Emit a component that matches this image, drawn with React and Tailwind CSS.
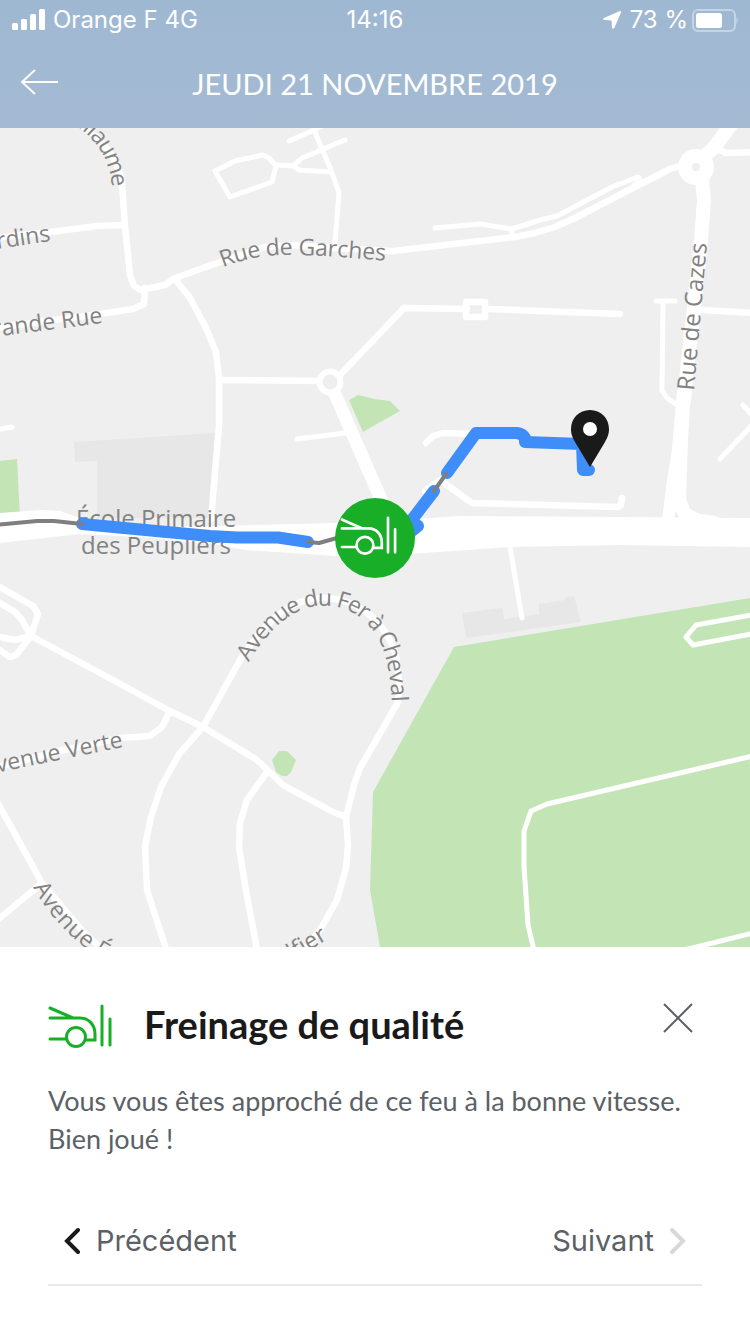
const minorRoads = [
	"M215 171L230 197L272 182L276 166L269 158L263 155L235 161Z",
	"M276 165L293 166L302 158L345 140",
	"M293 166L299 170L331 172",
	"M289 141L314 130L322 126",
	"M314 130L331 170L339 193L335 243",
	"M435 228L480 224L512 229L540 220L557 216L612 187L638 177L641 181L634 185",
	"M512 229V236",
	"M656 301H675",
	"M663 302L662 390L667 398L677 405",
	"M0 429L12 427",
	"M297 439L345 433",
	"M743 405L757 420L720 459",
	"M510 547L522 618",
	"M757 614L696 625L686 637L693 645L757 633",
	"M757 755L547 804L531 811L524 831V866L528 925L534 950",
	"M680 951L757 932",
];

const roads = [
	"M70 118C98 135 118 155 122 183L125 226L130 275L134 286L141 290L165 285L175 278L220 262L265 247L290 245L335 248L393 251L515 237L535 233L555 227L575 218L625 192L670 169L680 166",
	"M-5 238L50 232L97 226L125 225",
	"M145 288L144 304L133 309L100 314L-5 328",
	"M175 279L190 298L206 328L216 352L219 378V425L211 520",
	"M219 380L320 381",
	"M340 375L404 308L467 309",
	"M488 309L620 314",
	"M718 149L726 153L755 152",
	"M700 310L755 313",
	"M426 443L433 436L443 433L475 434",
	"M425 491L440 480L472 503L618 507L621 505L622 498",
	"M-5 584L33 606L38 614L31 636L16 655L10 657L-5 647",
	"M-5 600L15 612L22 620L31 636L15 640L-5 636",
	"M31 636L100 673L170 711L203 727L257 760L283 785L333 812L346 817",
	"M170 711L162 727L150 736L120 738L60 751L-5 768",
	"M203 727L240 660C262 625 290 599 320 598C360 597 386 624 396 655L400 690L397 704L375 742L360 768L354 785L346 817L348 845L346 868L337 900L320 930L300 955",
	"M203 727L179 754L161 787L151 817L145 846L147 890L168 955",
	"M267 772L247 800L240 823L239 847L245 885L258 955",
	"M-5 798L42 883L85 934L115 960",
	"M42 883L-5 922",
];

// Paths run through the middle of the letters, like the roads they name
const curvedLabels = [
	{ id: "guillaume", d: "M30 98C88 112 116 143 120 186", text: "Guillaume", end: true },
	{ id: "jardins", d: "M-80 252L50 233", text: "Jardins", end: true },
	{ id: "grande-rue", d: "M-95 340L102 315", text: "Grande Rue", end: true },
	{ id: "garches", d: "M220 260C250 248 275 246 300 247C330 248 355 250 400 254", text: "Rue de Garches" },
	{ id: "fer-a-cheval", d: "M242 658C260 628 286 600 318 598C350 596 370 611 384 632C395 652 401 680 400 730", text: "Avenue du Fer à Cheval" },
	{ id: "verte", d: "M-60 776L122 739", text: "Avenue Verte", end: true },
	{ id: "etienne", d: "M40 883C55 911 80 937 105 951L180 985", text: "Avenue Étienne" },
	{ id: "alfier", d: "M206 1004L324 932", text: "Rue Alfier", end: true },
];

const CarIcon = (props) => (
	<svg
		viewBox="0 0 64 44"
		fill="none"
		strokeWidth="3"
		strokeLinecap="round"
		aria-hidden="true"
		{...props}
	>
		<path d="M2 4L25 14M2 14H32C41 14 47 21 47 30V36H38M2 35H18M54 2V41M62 15V41" />
		<circle cx="28" cy="33" r="9.5" />
	</svg>
);

const StatusBar = () => (
	<div className="h-10 px-3 grid grid-cols-3 items-center text-2xl">
		<div className="flex items-center gap-2 whitespace-nowrap">
			<svg className="w-[33px] h-[22px]" viewBox="0 0 33 22" fill="white" aria-hidden="true">
				<rect x="0" y="14" width="6" height="7" rx="1.5" />
				<rect x="9" y="10" width="6" height="11" rx="1.5" />
				<rect x="18" y="5" width="6" height="16" rx="1.5" />
				<rect x="27" y="0" width="6" height="21" rx="1.5" />
			</svg>
			<span>Orange F 4G</span>
		</div>

		<span className="text-center">14:16</span>

		<div className="flex items-center justify-end gap-2 whitespace-nowrap">
			<svg className="w-5 h-5" viewBox="0 0 20 20" fill="white" aria-hidden="true">
				<path d="M18 1Q19.500 1 19 2.500L12.500 17.500Q10.500 20 10 17.500L9.500 10.500L2.500 10Q0 9.500 2 8Z" />
			</svg>
			<div className="flex items-center gap-1">
				<span>73 %</span>
				<svg className="w-[46px] h-6" viewBox="0 0 46 24" aria-hidden="true">
					<rect x="1" y="2" width="42" height="21" rx="5" fill="none" stroke="white" strokeOpacity="0.4" strokeWidth="2" />
					<rect x="4" y="5" width="26" height="15" rx="2.500" fill="white" />
					<path d="M44.500 9Q47 12.500 44.500 16Z" fill="white" fillOpacity="0.5" />
				</svg>
			</div>
		</div>
	</div>
);

const TripMap = () => (
	<svg
		className="block w-full h-auto bg-[#efefef]"
		viewBox="0 128 750 819"
		role="img"
		aria-label="Carte du trajet"
	>
		{/* Buildings and parks */}
		<g fill="#e7e7e7">
			<path d="M74 442L215 433L210 518H97V461L75 462Z" />
			<path d="M462 613L502 608L504 619L539 614V604L565 600V597L574 596L581 622L466 638Z" />
		</g>
		<g fill="#c3e5b5">
			<path d="M0 461L17 459L20 516H0Z" />
			<path d="M349 400L358 395L375 399L390 401L400 411L375 425L363 432Z" />
			<path d="M750 598L454 647L373 792L370 890L380 947H750Z" />
			<path d="M272 760L279 751H287L296 760L291 772L287 776H282L276 772Z" />
		</g>

		{/* Roads */}
		<g fill="none" stroke="white" strokeLinecap="round" strokeLinejoin="round">
			<g strokeWidth="5">
				{minorRoads.map((d) => (
					<path key={d} d={d} />
				))}
			</g>
			<g strokeWidth="6.500">
				{roads.map((d) => (
					<path key={d} d={d} />
				))}
				<rect x="466" y="302" width="19" height="15" />
			</g>
			<path d="M335 394L390 520" strokeWidth="13" />
			<path d="M700 160L713 149L736 118M702 180L704 200L701 240L695 300L688 360L684 400" strokeWidth="14" />
		</g>
		<circle cx="330" cy="382" r="10.500" fill="#efefef" stroke="white" strokeWidth="6" />
		<circle cx="696" cy="167" r="11" fill="#efefef" stroke="white" strokeWidth="14" />
		<path
			fill="white"
			d="M677 390H691L688 440L686 498L690 509L700 514L716 516L722 519H662L667 480L672 450Z"
		/>
		<path fill="#efefef" d="M676 511L679 518H674Z" />
		<path
			fill="white"
			d="M0 513L40 510L60 511L80 518L140 527L220 526L335 523L415 519L460 516L620 517L750 518V547L620 545L510 547L410 554L335 556L245 550L220 545L140 537L80 534L0 543Z"
		/>

		{/* Labels */}
		<g
			fill="#828282"
			fontSize="24"
			fontFamily="'Open Sans', 'Noto Sans', sans-serif"
		>
			<g fontSize="23">
				{curvedLabels.map(({ id, d, text, end }) => (
					<g key={id}>
						<path id={id} d={d} fill="none" />
						<text dy="8" textAnchor={end ? "end" : "start"}>
							<textPath href={`#${id}`} startOffset={end ? "100%" : "0"}>
								{text}
							</textPath>
						</text>
					</g>
				))}
			</g>
			<text transform="translate(694 391) rotate(-85)">Rue de Cazes</text>
			<text x="156" y="527" textAnchor="middle">École Primaire</text>
			<text x="156" y="554" textAnchor="middle">des Peupliers</text>
		</g>

		{/* Route */}
		<g fill="none" strokeLinecap="round" strokeLinejoin="round">
			<g stroke="#3f8df8" strokeWidth="12">
				<path d="M82 524L156 531L210 536L237 537.500H278L308 542" />
				<path d="M434 491L411 521L418 526L408 534" />
				<path d="M447 473L476 433H517Q523 434 525 438V442L582 444L583 470H589" />
			</g>
			<path
				d="M-4 525L37 521H54L82 524M308 542L319 543L337 538M434 491L446 474"
				stroke="#7f7f7f"
				strokeWidth="4"
			/>
		</g>

		<path
			d="M590 410C579 410 571 418.500 571 429C571 435 573 438 575 442L590 467L605 442C607 438 609 435 609 429C609 418.500 601 410 590 410Z"
			fill="#1a1a1a"
		/>
		<circle cx="590" cy="429" r="7" fill="white" />

		<circle cx="375" cy="538" r="40" fill="#18ae27" />
		<CarIcon x="340" y="516" width="57" height="39" stroke="white" />
	</svg>
);

const App = () => {
	return (
		<main className="min-h-screen flex flex-col bg-white">
			<header className="bg-linear-to-b from-[#9fb8d2] to-[#a4bad3] text-white font-[Inter,sans-serif]">
				<StatusBar />

				<div className="h-[88px] px-5 grid grid-cols-[40px_1fr_40px] items-center">
					<button aria-label="Retour">
						<svg className="w-10 h-7 mb-1" viewBox="0 0 40 28" fill="none" stroke="white" strokeWidth="2" aria-hidden="true">
							<path d="M38 14H2M15 2L2 14L15 26" />
						</svg>
					</button>
					<h1 className="text-center text-[29px] leading-10 font-[Lato,sans-serif]">
						JEUDI 21 NOVEMBRE 2019
					</h1>
				</div>
			</header>

			<TripMap />

			<section className="px-12 pt-[47px] font-[Lato,sans-serif]">
				<div className="flex items-start">
					<CarIcon className="w-16 h-11 mt-[10px] mr-8 shrink-0" stroke="#18ae27" />
					<h2 className="flex-1 text-[38px] leading-[60px] font-bold text-[#1a1a1a]">
						Freinage de qualité
					</h2>
					<button className="p-2" aria-label="Fermer">
						<svg className="w-8 h-8" viewBox="0 0 32 32" fill="none" stroke="#5b6166" strokeWidth="2" aria-hidden="true">
							<path d="M2 2L30 30M30 2L2 30" />
						</svg>
					</button>
				</div>

				<p className="mt-7 text-[27px] leading-[38px] text-[#5b6166]">
					Vous vous êtes approché de ce feu à la bonne vitesse. Bien joué !
				</p>

				<nav className="mt-10 h-[88px] px-4 flex items-center justify-between border-b-2 border-[#eaeaea] text-[29px] text-[#5b6166] font-[Inter,sans-serif]">
					<button className="flex items-center gap-4">
						<svg className="w-4 h-7" viewBox="0 0 16 28" fill="none" stroke="#1a1a1a" strokeWidth="4" strokeLinecap="round" aria-hidden="true">
							<path d="M14 3L3 14L14 25" />
						</svg>
						Précédent
					</button>
					<button className="flex items-center gap-4">
						Suivant
						<svg className="w-4 h-7" viewBox="0 0 16 28" fill="none" stroke="#d8d8d8" strokeWidth="4" strokeLinecap="round" aria-hidden="true">
							<path d="M2 3L13 14L2 25" />
						</svg>
					</button>
				</nav>
			</section>
		</main>
	);
};
export default App;
